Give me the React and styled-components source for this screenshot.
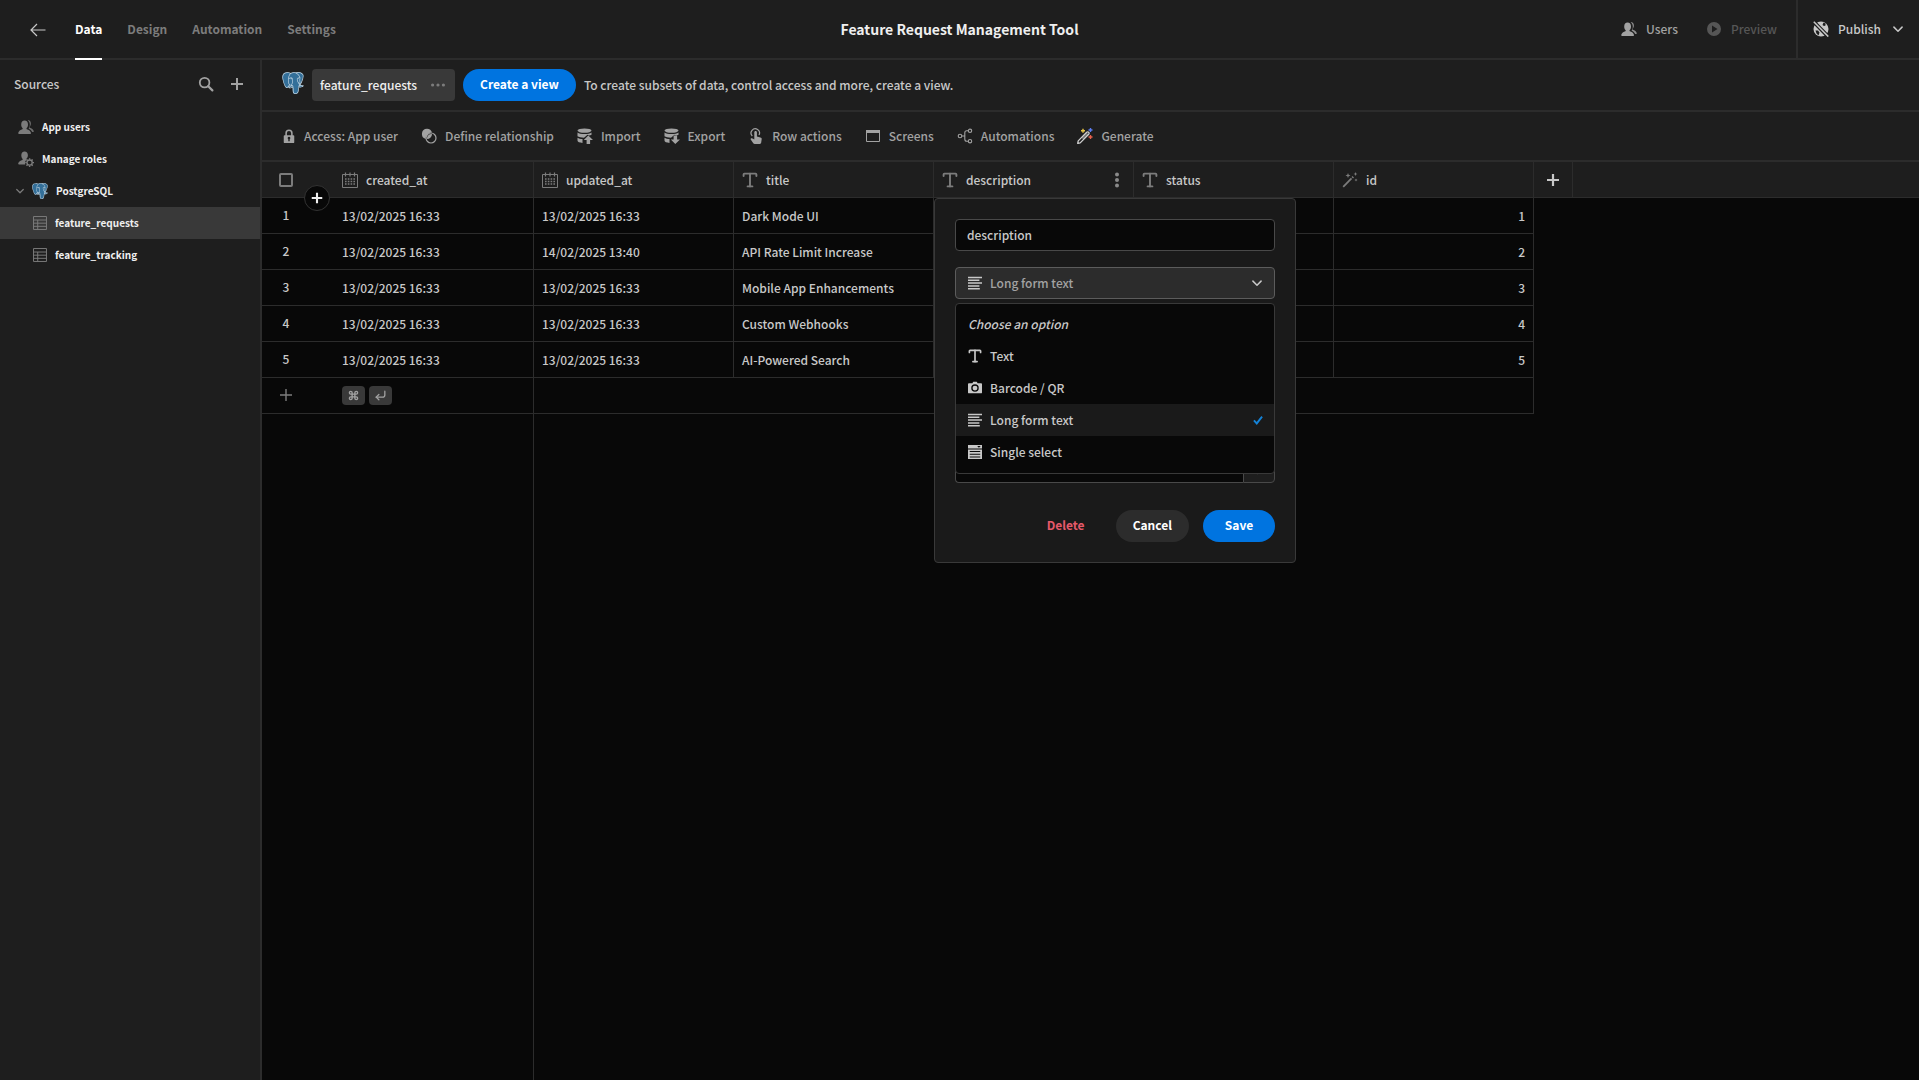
import { useState } from "react";
import styled, { createGlobalStyle, css } from "styled-components";
import { Command, CornerDownLeft, Type } from "lucide-react";
import { SiPostgresql } from "react-icons/si";

const GlobalStyle = createGlobalStyle`
  * {
    box-sizing: border-box;
  }

  body {
    margin: 0;
    background: #080808;
    color: #c8c8c8;
    font-family: "Noto Sans CJK SC", "Source Sans Pro", sans-serif;
    font-size: 12px;
    font-weight: 500;
    line-height: 18px;
  }

  button,
  input,
  select {
    font: inherit;
    color: inherit;
  }

  button {
    padding: 0;
    border: none;
    background: none;
    cursor: pointer;
  }

  svg {
    display: block;
    flex: none;
  }
`;

/* ---------- icons ---------- */

function Icon({ size = 16, children, ...rest }) {
  return (
    <svg
      width={size}
      height={size}
      viewBox="0 0 16 16"
      fill="currentColor"
      aria-hidden="true"
      {...rest}
    >
      {children}
    </svg>
  );
}

function Line({ d, width = 2, ...rest }) {
  return <path d={d} fill="none" stroke="currentColor" strokeWidth={width} {...rest} />;
}

const BackIcon = () => (
  <Icon>
    <Line d="M15.5 8H1.5M7 2 1 8l6 6" width={1.2} />
  </Icon>
);

const SearchIcon = () => (
  <Icon>
    <circle cx="6.6" cy="6.6" r="4.8" fill="none" stroke="currentColor" strokeWidth="1.8" />
    <Line d="M10.2 10.2 14.4 14.4" width={2.2} strokeLinecap="round" />
  </Icon>
);

const PlusIcon = ({ size, width = 2 }) => (
  <Icon size={size}>
    <Line d="M8 2v12M2 8h12" width={width} />
  </Icon>
);

const ChevronIcon = ({ size = 10 }) => (
  <Icon size={size}>
    <Line d="M1.5 5 8 11.5 14.5 5" width={2.4} strokeLinecap="round" strokeLinejoin="round" />
  </Icon>
);

const UsersIcon = () => (
  <Icon>
    <path d="M6.6 1.5c2.1 0 3.4 1.6 3.4 3.9 0 1.6-.6 2.9-1.3 3.6-.3.3-.3 1 .1 1.2 1.9.7 3.9 1.5 4.2 3.9.1.5-.2.9-.7.9H.9c-.5 0-.8-.4-.7-.9.4-2.4 2.4-3.2 4.2-3.900.4-.2.4-.9.1-1.200C3.800 8.300 3.200 7 3.200 5.400c0-2.300 1.300-3.900 3.400-3.900z" />
    <path d="M9.700 1c2 .1 3.200 1.500 3.200 3.500 0 1.400-.5 2.500-1.100 3.200-.3.3-.2.800.1 1 1.700.8 3.500 1.600 3.900 3.600.1.500-.2.800-.6.800h-1c-.7-1.800-2-2.700-3.600-3.400.8-1 1.200-2.500 1.200-4.100 0-1.900-.9-3.500-2.100-4.600z" opacity=".85" />
  </Icon>
);

const RolesIcon = () => (
  <Icon>
    <path d="M6.600.5c2 0 3.300 1.500 3.300 3.700 0 1.500-.6 2.700-1.300 3.400-.3.3-.3.800 0 1.100-1.100.9-1.600 2.100-1.600 3.300 0 .5.1 1.100.3 1.500H.900c-.5 0-.8-.4-.7-.9.400-2.200 2.400-3 4.200-3.700.4-.2.400-.900.100-1.200C3.800 7 3.300 5.800 3.300 4.200 3.300 2 4.600.5 6.600.5z" />
    <circle cx="11.600" cy="11.600" r="2.600" fill="none" stroke="currentColor" strokeWidth="1.300" />
    <Line d="M11.600 7.200v1.600M11.600 14.400V16M7.200 11.600h1.600M14.400 11.600H16M8.500 8.500l1.100 1.100M13.600 13.600l1.100 1.100M8.500 14.700l1.100-1.100M13.600 9.600l1.100-1.100" width={1.4} />
  </Icon>
);

const TableIcon = () => (
  <Icon size={14}>
    <Line d="M.6.6h14.800v14.800H.6zM.6 4.600h14.800M.6 8.200h14.800M.6 11.800h14.800M5.400 4.600v10.800" width={1.1} />
  </Icon>
);

const LockIcon = () => (
  <Icon size={14}>
    <Line d="M4.700 8V4.800a3.300 3.300 0 0 1 6.600 0V8" width={1.8} />
    <path
      fillRule="evenodd"
      d="M3 7h10c.6 0 1 .4 1 1v7c0 .6-.4 1-1 1H3c-.6 0-1-.4-1-1V8c0-.6.4-1 1-1zm5 2a1.500 1.500 0 0 0-.8 2.800V14h1.600v-2.200A1.500 1.500 0 0 0 8 9z"
    />
  </Icon>
);

const RelationIcon = () => (
  <Icon>
    <path d="M6 .8a5.200 5.200 0 0 1 5 3.800A6 6 0 0 0 4.700 11 5.200 5.200 0 0 1 6 .8z" />
    <circle cx="10" cy="10" r="5" fill="none" stroke="currentColor" strokeWidth="1.2" />
    <path d="M11 6a5.200 5.200 0 0 1-5 5.100A4.600 4.600 0 0 1 11 6z" />
  </Icon>
);

function DatabaseIcon({ arrow }) {
  return (
    <Icon>
      <ellipse cx="7.5" cy="2.6" rx="7" ry="2.2" />
      <path d="M.5 4.400c1.400 1 4 1.500 7 1.500s5.600-.5 7-1.500v2.400c-.8.300-1.600.500-2.500.7L10.500 6.800 7 9.800c-2.700-.1-5.200-.6-6.500-1.500z" />
      <path d="M.5 9.700c1.200.8 3 1.200 5 1.300v3.900c-2.800-.1-5-.9-5-2.300z" />
      <path d={arrow} />
    </Icon>
  );
}

const ImportIcon = () => (
  <DatabaseIcon arrow="M11.300 7.600 16 12.100h-2.900V16H9.600v-3.900H6.800z" />
);

const ExportIcon = () => (
  <DatabaseIcon arrow="M9.600 7.600h3.500v3.900H16L11.300 16l-4.500-4.500h2.800z" />
);

const TouchIcon = () => (
  <Icon>
    <Line d="M4.300 8A4.200 4.200 0 1 1 11 7" width={1.2} />
    <path d="M7.600 3c.8 0 1.300.6 1.300 1.300v4.300l3.500.8c.9.2 1.400.8 1.300 1.700l-.5 3.500c-.1.8-.6 1.400-1.400 1.400H6.700c-.6 0-1.100-.3-1.400-.8L2.700 11.500c-.5-.9.5-1.700 1.300-1.200l2.300 1.200V4.300c0-.7.5-1.300 1.300-1.300z" />
  </Icon>
);

const ScreenIcon = () => (
  <Icon>
    <Line d="M1.500 2.500h13v11h-13z" width={1} />
    <path d="M1 2h14v3H1z" />
  </Icon>
);

const FlowIcon = () => (
  <Icon>
    <g fill="none" stroke="currentColor" strokeWidth="1.1">
      <circle cx="3" cy="8" r="1.8" />
      <circle cx="13" cy="2.8" r="1.7" />
      <circle cx="13" cy="13.2" r="1.7" />
      <path d="M4.800 8h3M11.300 2.800H9.800c-1.200 0-2 .8-2 2v6.400c0 1.200.8 2 2 2h1.500" />
    </g>
  </Icon>
);

const GenerateIcon = () => (
  <Icon>
    <path
      d="M1.200 12.900 9.700 4.300c1.300-1.100 3.100.5 2 1.900L3.200 14.900l-2.500.5z"
      fill="#1e1e1e"
      stroke="#d0d0d0"
      strokeWidth="1.3"
      strokeLinejoin="round"
    />
    <path d="M9.800 4.400 4.500 9.800l1.900 2 5.300-5.400z" fill="#d0d0d0" opacity=".45" />
    <path d="M6 .8v4M4 2.800h4" stroke="#e8c547" strokeWidth="1.4" />
    <path d="M13.500 0v4M11.500 2h4" stroke="#5b7cf0" strokeWidth="1.4" />
    <path d="M13.500 7v4M11.500 9h4" stroke="#e8604c" strokeWidth="1.4" />
  </Icon>
);

const CalendarIcon = () => (
  <Icon>
    <Line d="M.5 2.500h15v13H.5z" width={1} />
    <Line d="M3.500.5v4M8 .5v4M12.500.5v4" width={1.2} />
    <Line d="M3 7h10M3 9.500h10M3 12h10" width={1.6} strokeDasharray="1.6 1.2" />
  </Icon>
);

const TypeIcon = ({ size = 16 }) => (
  <Type size={size} viewBox="3 2 18 20" strokeWidth={2.4} />
);

const WandIcon = () => (
  <Icon>
    <Line d="M1.200 14.800 9.500 6.300" width={1.8} />
    <path d="m6 1 .7 1.800L8.500 3.500 6.700 4.200 6 6l-.7-1.800L3.500 3.500l1.800-.7zM13.500 0l.6 1.400 1.400.6-1.400.6-.6 1.400-.6-1.400-1.400-.6 1.400-.6zM14 6.500l.5 1 1 .5-1 .5-.5 1-.5-1-1-.5 1-.5zM10.500 4l1.500 1.500-1 1L9.500 5z" />
  </Icon>
);

const LongTextIcon = () => (
  <Icon size={14}>
    <Line d="M0 1.700h16M0 4.900h13M0 8.100h16M0 11.300h13M0 14.500h13.500" width={1.7} />
  </Icon>
);

const CameraIcon = () => (
  <Icon size={14}>
    <path
      fillRule="evenodd"
      d="M5 2.500 6 .9h4l1 1.600h4c.6 0 1 .4 1 1v9.500c0 .6-.4 1-1 1H1c-.6 0-1-.4-1-1V3.500c0-.6.4-1 1-1zM8 3.800a4.300 4.300 0 1 0 0 8.600 4.300 4.300 0 0 0 0-8.600zm0 1.500a2.800 2.800 0 1 1 0 5.600 2.800 2.800 0 0 1 0-5.600z"
    />
  </Icon>
);

const SelectIcon = () => (
  <Icon size={14}>
    <path
      fillRule="evenodd"
      d="M0 0h16v4H0zM10.500 1.200 12.500 3.200 14.500 1.200zM0 5h16v11H0zM2 6.800v1.300h12V6.800zM2 9.900v1.300h12V9.900zM2 13v1.300h12V13z"
    />
  </Icon>
);

const CheckIcon = () => (
  <Icon size={10}>
    <Line d="M1.500 8.500 6 13.500 14.500 2.500" width={3} />
  </Icon>
);

const BoltIcon = () => (
  <Icon>
    <path d="M10 1 3.500 9H7l-1 6.500L12.500 7H9z" />
  </Icon>
);

const PlayIcon = () => (
  <Icon>
    <path fillRule="evenodd" d="M8 1a7 7 0 1 0 0 14A7 7 0 0 0 8 1zM6 4.500 11.500 8 6 11.500z" />
  </Icon>
);

const GlobeStrikeIcon = () => (
  <Icon>
    <circle cx="8" cy="8" r="7.5" />
    <path d="M10.500 1.500 9.500 4l1.500 1L12.500 4.500 12.500 2.500zM2.500 9.500l2.500 0 1.500 2L5.500 14.500 3.500 12.500z" fill="#1e1e1e" />
    <path d="M0 0 15.500 16" stroke="#1e1e1e" strokeWidth="3.8" />
    <path d="M.8.800 15.300 15.600" stroke="currentColor" strokeWidth="1.5" />
  </Icon>
);

const DotsIcon = ({ vertical }) => (
  <Icon>
    {[2.6, 8, 13.4].map((n) => (
      <circle key={n} cx={vertical ? 8 : n} cy={vertical ? n : 8} r={vertical ? 2 : 1.6} />
    ))}
  </Icon>
);

const ElephantLogo = ({ size }) => (
  <svg width={size} height={size} viewBox="0 0 24 24" aria-hidden="true">
    <path
      fill="#336f99"
      d="M.5 5.400C.6 2.500 2.500.6 4.900.6c2 0 3.300.2 4.600.7 1.200-.6 2-.8 3.400-.8 1 0 1.700 0 2.300.2C18.500-.2 21.500.5 23 3c.6 1.500-.3 4-1.300 6.400-.5 2-1.200 3.600-1.700 4.900l3.200.7c-.5 1-1.500 1.500-2.900 1.700L18 16.500c-.2 2-.2 4.500-.7 6.300-.5 1.100-5 1.700-5.300-.3-.3-2-.2-4-.3-6l-3.900.5c-1 0-1.800.6-2.700.4-1.500-.8-1.700-2.200-2.500-3.900C1.200 9.500.5 8 .5 5.400z"
    />
    <SiPostgresql size={24} color="#c3d6e3" />
  </svg>
);

/* ---------- top bar ---------- */

const Page = styled.div`
  min-height: 100vh;
  display: flex;
  flex-direction: column;
`;

const TopBar = styled.header`
  height: 60px;
  display: grid;
  grid-template-columns: 1fr auto 1fr;
  background: #1e1e1e;
  box-shadow: inset 0 -2px 0 #2c2c2c;
`;

const TopLeft = styled.nav`
  display: flex;
  gap: 25px;
  padding-left: 30px;
`;

const BackButton = styled.button`
  margin-right: 4px;
`;

const Tab = styled.a`
  display: flex;
  align-items: center;
  border-bottom: 2px solid ${(p) => (p.$active ? "#ffffff" : "transparent")};
  color: ${(p) => (p.$active ? "#ffffff" : "#7c7c7c")};
  font-weight: 700;
  text-decoration: none;
`;

const Title = styled.h1`
  margin: 0 0 2px;
  align-self: center;
  color: #efefef;
  font-size: 14px;
  font-weight: 700;
  line-height: 18px;
`;

const TopRight = styled.div`
  display: flex;
  justify-content: flex-end;
`;

const TopButton = styled.button`
  display: flex;
  align-items: center;
  gap: 9px;
  margin-right: ${(p) => p.$after}px;
  padding-bottom: 2px;
  color: #a2a2a2;

  &:disabled {
    color: #565656;
    cursor: default;
  }
`;

const PublishButton = styled(TopButton)`
  padding: 0 16px 2px 15px;
  border-left: 2px solid #2c2c2c;
  color: #c8c8c8;

  svg:last-child {
    margin-left: 3px;
  }
`;

/* ---------- sidebar ---------- */

const Body = styled.div`
  flex: 1;
  display: flex;
`;

const Sidebar = styled.aside`
  width: 262px;
  flex: none;
  background: #1e1e1e;
  border-right: 2px solid #2c2c2c;
`;

const SidebarHead = styled.div`
  height: 48px;
  margin-bottom: 3px;
  padding: 0 15px 0 14px;
  display: flex;
  align-items: center;
  gap: 15px;

  h2 {
    margin: 0 auto 0 0;
    font: inherit;
  }

  button {
    color: #a2a2a2;
  }
`;

const SourceItem = styled.a`
  height: 32px;
  display: flex;
  align-items: center;
  gap: 8px;
  padding-left: ${(p) => p.$indent}px;
  background: ${(p) => (p.$active ? "#393939" : "transparent")};
  color: #efefef;
  font-size: 10px;
  font-weight: 700;
  text-decoration: none;

  > svg {
    color: #7c7c7c;
  }
`;

/* ---------- main area ---------- */

const Main = styled.main`
  flex: 1;
  min-width: 0;
  display: flex;
  flex-direction: column;
`;

const Bar = styled.div`
  min-height: ${(p) => p.$height}px;
  display: flex;
  align-items: center;
  padding-left: 20px;
  background: #1e1e1e;
  border-bottom: 2px solid #2c2c2c;

  > svg {
    margin-bottom: 4px;
  }
`;

const TablePill = styled.button`
  height: 32px;
  margin: 0 8px;
  padding: 0 9px 0 8px;
  display: flex;
  align-items: center;
  gap: 13px;
  border-radius: 4px;
  background: #393939;
  color: #efefef;

  svg {
    color: #7c7c7c;
  }
`;

const Pill = styled.button`
  height: 32px;
  min-width: 72px;
  padding: 0 17px 2px;
  border-radius: 16px;
  color: #ffffff;
  font-weight: 700;
  ${(p) => p.$kind === "primary" && css`background: #0074e0;`}
  ${(p) => p.$kind === "secondary" && css`background: #2c2c2c;`}
  ${(p) => p.$kind === "danger" && css`color: #e5596a;`}
`;

const Hint = styled.p`
  margin: 0 0 0 8px;
`;

const Tool = styled.button`
  display: flex;
  align-items: center;
  gap: 8px;
  margin-right: 23px;
  color: #a2a2a2;
`;

/* ---------- grid ---------- */

const Grid = styled.table`
  width: 100%;
  table-layout: fixed;
  border-collapse: separate;
  border-spacing: 0;
`;

const HeadCell = styled.th`
  position: relative;
  height: 36px;
  padding: 0 8px;
  background: #1e1e1e;
  border-bottom: 1px solid #2c2c2c;
  border-right: ${(p) => (p.$plain ? 0 : 1)}px solid #2c2c2c;
  font-weight: 500;
  text-align: left;
`;

const HeadLabel = styled.div`
  display: flex;
  align-items: center;
  gap: 8px;

  > svg {
    color: #7c7c7c;
  }

  > button {
    margin-left: auto;
    color: #8a8a8a;
  }
`;

const AddColumn = styled.button`
  display: flex;
  margin: 0 auto;
`;

const Cell = styled.td`
  height: 36px;
  padding: 1px 8px 0;
  border-bottom: 1px solid #2c2c2c;
  border-right: ${(p) => (p.$plain ? 0 : 1)}px solid #2c2c2c;
  text-align: ${(p) => p.$align || "left"};
`;

const Gutter = styled.div`
  width: 48px;
  display: flex;
  justify-content: center;
  margin-left: -8px;

  td & {
    padding-bottom: 2px;
  }
`;

const Checkbox = styled.input`
  appearance: none;
  width: 14px;
  height: 14px;
  margin: 0;
  border: 2px solid #7c7c7c;
  border-radius: 2px;
`;

const InsertButton = styled.button`
  position: absolute;
  z-index: 1;
  top: 23px;
  left: 42px;
  width: 26px;
  height: 26px;
  display: grid;
  place-items: center;
  border: 1px solid #333333;
  border-radius: 50%;
  background: #080808;
  color: #efefef;
`;

const AddRow = styled.button`
  display: flex;
  color: #7c7c7c;
`;

const Keys = styled.div`
  display: flex;
  gap: 4px;
  padding-bottom: 2px;
`;

const Key = styled.kbd`
  width: 23px;
  height: 19px;
  display: grid;
  place-items: center;
  border-radius: 4px;
  background: #393939;
  color: #a2a2a2;
`;

const GridRest = styled.div`
  flex: 1;
  width: 272px;
  border-right: 1px solid #2c2c2c;
`;

/* ---------- column editor ---------- */

const Popover = styled.form`
  position: absolute;
  z-index: 2;
  top: 36px;
  left: 0;
  width: 362px;
  padding: 20px;
  border: 1px solid #393939;
  border-radius: 4px;
  background: #1a1a1a;
`;

const TextInput = styled.input`
  display: block;
  width: 100%;
  height: 32px;
  padding: 0 11px 2px;
  border: 1px solid #494949;
  border-radius: 4px;
  background: #080808;
`;

const Picker = styled.div`
  position: relative;
  margin-top: 16px;

  > svg {
    position: absolute;
    top: 9px;
    pointer-events: none;
  }

  > svg:first-child {
    left: 13px;
  }

  > svg:last-of-type {
    right: 13px;
    top: 11px;
  }
`;

const PickerSelect = styled.select`
  appearance: none;
  display: block;
  width: 100%;
  height: 32px;
  padding: 0 34px;
  border: 1px solid #5c5c5c;
  border-radius: 4px;
  background: #2c2c2c;
  color: #a2a2a2;
`;

const Menu = styled.ul`
  position: absolute;
  z-index: 1;
  top: 36px;
  left: 0;
  right: 0;
  margin: 0;
  padding: 4px 0 5px;
  border: 1px solid #393939;
  border-radius: 4px;
  background: #080808;
  list-style: none;
`;

const MenuItem = styled.button`
  width: 100%;
  height: 32px;
  padding: 0 11px 0 12px;
  display: flex;
  align-items: center;
  gap: 8px;
  background: ${(p) => (p.$active ? "#1a1a1a" : "transparent")};
  font-style: ${(p) => (p.$hint ? "italic" : "normal")};

  svg:nth-of-type(2) {
    margin-left: auto;
    color: #1483d8;
  }
`;

const BindingField = styled.div`
  display: flex;
  margin-top: 152px;

  input {
    border-radius: 4px 0 0 4px;
    border-right: none;
  }

  button {
    width: 32px;
    flex: none;
    display: grid;
    place-items: center;
    border: 1px solid #494949;
    border-radius: 0 4px 4px 0;
    background: #1e1e1e;
    color: #a2a2a2;
  }
`;

const Actions = styled.div`
  display: flex;
  justify-content: flex-end;
  gap: 14px;
  margin-top: 27px;
`;

const tools = [
  ["Access: App user", LockIcon],
  ["Define relationship", RelationIcon],
  ["Import", ImportIcon],
  ["Export", ExportIcon],
  ["Row actions", TouchIcon],
  ["Screens", ScreenIcon],
  ["Automations", FlowIcon],
  ["Generate", GenerateIcon],
];

const columns = [
  ["created_at", CalendarIcon],
  ["updated_at", CalendarIcon],
  ["title", TypeIcon],
  ["description", TypeIcon],
  ["status", TypeIcon],
  ["id", WandIcon],
];

const rows = [
  { id: 1, created: "13/02/2025 16:33", updated: "13/02/2025 16:33", title: "Dark Mode UI" },
  { id: 2, created: "13/02/2025 16:33", updated: "14/02/2025 13:40", title: "API Rate Limit Increase" },
  { id: 3, created: "13/02/2025 16:33", updated: "13/02/2025 16:33", title: "Mobile App Enhancements" },
  { id: 4, created: "13/02/2025 16:33", updated: "13/02/2025 16:33", title: "Custom Webhooks" },
  { id: 5, created: "13/02/2025 16:33", updated: "13/02/2025 16:33", title: "AI-Powered Search" },
];

const types = [
  ["Text", () => <TypeIcon size={14} />],
  ["Barcode / QR", CameraIcon],
  ["Long form text", LongTextIcon],
  ["Single select", SelectIcon],
];

function ColumnEditor() {
  const [name, setName] = useState("description");
  const [type, setType] = useState("Long form text");

  return (
    <Popover onSubmit={(e) => e.preventDefault()}>
      <TextInput
        aria-label="Column name"
        value={name}
        onChange={(e) => setName(e.target.value)}
      />
      <Picker>
        <LongTextIcon />
        <PickerSelect
          aria-label="Column type"
          value={type}
          onChange={(e) => setType(e.target.value)}
        >
          {types.map(([label]) => (
            <option key={label}>{label}</option>
          ))}
        </PickerSelect>
        <ChevronIcon />
        <Menu>
          <li>
            <MenuItem type="button" $hint>
              Choose an option
            </MenuItem>
          </li>
          {types.map(([label, TypeGlyph]) => (
            <li key={label}>
              <MenuItem
                type="button"
                $active={label === type}
                onClick={() => setType(label)}
              >
                <TypeGlyph />
                {label}
                {label === type && <CheckIcon />}
              </MenuItem>
            </li>
          ))}
        </Menu>
      </Picker>
      <BindingField>
        <TextInput aria-label="Default value" />
        <button type="button" aria-label="Bind value">
          <BoltIcon />
        </button>
      </BindingField>
      <Actions>
        <Pill type="button" $kind="danger">Delete</Pill>
        <Pill type="button" $kind="secondary">Cancel</Pill>
        <Pill type="submit" $kind="primary">Save</Pill>
      </Actions>
    </Popover>
  );
}

function DataGrid() {
  return (
    <Grid>
      <colgroup>
        <col style={{ width: 72 }} />
        {columns.map(([name]) => (
          <col key={name} style={{ width: 200 }} />
        ))}
        <col style={{ width: 39 }} />
        <col />
      </colgroup>
      <thead>
        <tr>
          <HeadCell $plain>
            <Gutter>
              <Checkbox type="checkbox" aria-label="Select all rows" />
            </Gutter>
            <InsertButton aria-label="Insert row">
              <PlusIcon size={14} width={2.4} />
            </InsertButton>
          </HeadCell>
          {columns.map(([name, ColumnIcon]) => (
            <HeadCell key={name}>
              <HeadLabel>
                <ColumnIcon />
                {name}
                {name === "description" && (
                  <button aria-label="Column options">
                    <DotsIcon vertical />
                  </button>
                )}
              </HeadLabel>
              {name === "description" && <ColumnEditor />}
            </HeadCell>
          ))}
          <HeadCell>
            <AddColumn aria-label="Add column">
              <PlusIcon size={16} width={2.2} />
            </AddColumn>
          </HeadCell>
          <HeadCell $plain />
        </tr>
      </thead>
      <tbody>
        {rows.map((row) => (
          <tr key={row.id}>
            <Cell $plain>
              <Gutter>{row.id}</Gutter>
            </Cell>
            <Cell>{row.created}</Cell>
            <Cell>{row.updated}</Cell>
            <Cell>{row.title}</Cell>
            <Cell />
            <Cell />
            <Cell $align="right">{row.id}</Cell>
          </tr>
        ))}
        <tr>
          <Cell $plain>
            <Gutter>
              <AddRow aria-label="Add row">
                <PlusIcon size={16} width={1.4} />
              </AddRow>
            </Gutter>
          </Cell>
          <Cell>
            <Keys>
              <Key>
                <Command size={11} strokeWidth={3} />
              </Key>
              <Key>
                <CornerDownLeft size={13} strokeWidth={2.4} />
              </Key>
            </Keys>
          </Cell>
          <Cell colSpan={5} />
        </tr>
      </tbody>
    </Grid>
  );
}

export default function App() {
  return (
    <Page>
      <GlobalStyle />
      <TopBar>
        <TopLeft>
          <BackButton aria-label="Back">
            <BackIcon />
          </BackButton>
          <Tab href="#data" $active>Data</Tab>
          <Tab href="#design">Design</Tab>
          <Tab href="#automation">Automation</Tab>
          <Tab href="#settings">Settings</Tab>
        </TopLeft>
        <Title>Feature Request Management Tool</Title>
        <TopRight>
          <TopButton $after={28}>
            <UsersIcon />
            Users
          </TopButton>
          <TopButton $after={19} disabled>
            <PlayIcon />
            Preview
          </TopButton>
          <PublishButton $after={0}>
            <GlobeStrikeIcon />
            Publish
            <ChevronIcon />
          </PublishButton>
        </TopRight>
      </TopBar>

      <Body>
        <Sidebar>
          <SidebarHead>
            <h2>Sources</h2>
            <button aria-label="Search sources">
              <SearchIcon />
            </button>
            <button aria-label="Add source">
              <PlusIcon />
            </button>
          </SidebarHead>
          <nav>
            <SourceItem href="#users" $indent={18}>
              <UsersIcon />
              App users
            </SourceItem>
            <SourceItem href="#roles" $indent={18}>
              <RolesIcon />
              Manage roles
            </SourceItem>
            <SourceItem href="#postgres" $indent={16}>
              <ChevronIcon size={8} />
              <ElephantLogo size={16} />
              PostgreSQL
            </SourceItem>
            <SourceItem href="#requests" $indent={33} $active>
              <TableIcon />
              feature_requests
            </SourceItem>
            <SourceItem href="#tracking" $indent={33}>
              <TableIcon />
              feature_tracking
            </SourceItem>
          </nav>
        </Sidebar>

        <Main>
          <Bar $height={52}>
            <ElephantLogo size={22} />
            <TablePill>
              feature_requests
              <DotsIcon />
            </TablePill>
            <Pill $kind="primary">Create a view</Pill>
            <Hint>To create subsets of data, control access and more, create a view.</Hint>
          </Bar>
          <Bar $height={50}>
            {tools.map(([label, ToolIcon]) => (
              <Tool key={label}>
                <ToolIcon />
                {label}
              </Tool>
            ))}
          </Bar>
          <DataGrid />
          <GridRest />
        </Main>
      </Body>
    </Page>
  );
}
